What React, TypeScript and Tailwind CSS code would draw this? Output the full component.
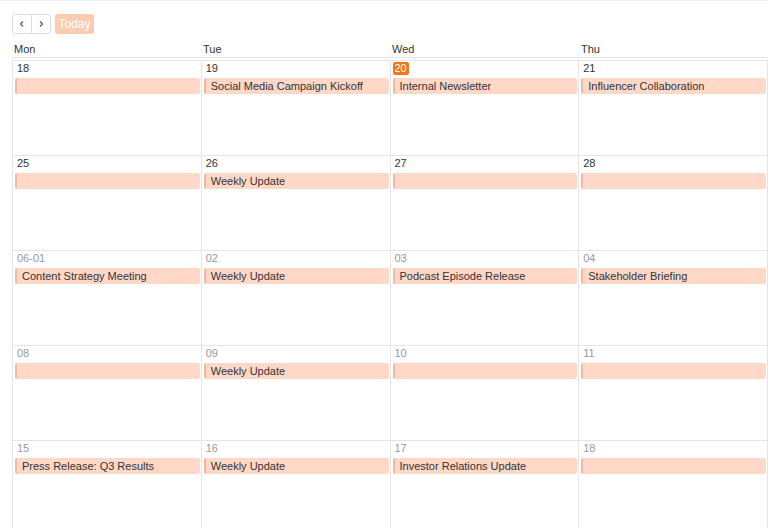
import React from "react";

type Day = {
  label: string;
  muted?: boolean;
  today?: boolean;
  event?: string;
};

const weeks: Day[][] = [
  [
    { label: "18", event: "" },
    { label: "19", event: "Social Media Campaign Kickoff" },
    { label: "20", today: true, event: "Internal Newsletter" },
    { label: "21", event: "Influencer Collaboration" },
  ],
  [
    { label: "25", event: "" },
    { label: "26", event: "Weekly Update" },
    { label: "27", event: "" },
    { label: "28", event: "" },
  ],
  [
    { label: "06-01", muted: true, event: "Content Strategy Meeting" },
    { label: "02", muted: true, event: "Weekly Update" },
    { label: "03", muted: true, event: "Podcast Episode Release" },
    { label: "04", muted: true, event: "Stakeholder Briefing" },
  ],
  [
    { label: "08", muted: true, event: "" },
    { label: "09", muted: true, event: "Weekly Update" },
    { label: "10", muted: true, event: "" },
    { label: "11", muted: true, event: "" },
  ],
  [
    { label: "15", muted: true, event: "Press Release: Q3 Results" },
    { label: "16", muted: true, event: "Weekly Update" },
    { label: "17", muted: true, event: "Investor Relations Update" },
    { label: "18", muted: true, event: "" },
  ],
];

const dayNames = ["Mon", "Tue", "Wed", "Thu"];

const Cell: React.FC<{ day: Day }> = ({ day }) => (
  <div className="h-[95px] border-r border-b border-[#e5e5e5] flex flex-col">
    <div className="h-[17px] pl-[4px] pt-[1px] flex items-start">
      {day.today ? (
        <span className="bg-[#f5761a] text-white text-[11px] leading-[13px] px-[2px] rounded-[2px] -ml-[2px]">
          {day.label}
        </span>
      ) : (
        <span
          className={`text-[11px] leading-[13px] ${
            day.muted ? "text-[#999999]" : "text-[#333333]"
          }`}
        >
          {day.label}
        </span>
      )}
    </div>
    {day.event !== undefined && (
      <div className="ml-[2px] mr-[1px] h-[16px] bg-[#ffd8c8] border-l-2 border-[#f2b8a2] rounded-[2px] pl-[5px] flex items-center text-[11px] text-[#333333] truncate">
        {day.event}
      </div>
    )}
  </div>
);

export default function App() {
  return (
    <div
      className="w-[768px] h-[528px] overflow-hidden bg-white border-t border-[#eeeeee]"
      style={{ fontFamily: '"Liberation Sans", Arial, sans-serif' }}
    >
      <div className="pl-[12px] pt-[13px]">
        <div className="flex items-center gap-[4px] h-[20px]">
          <div className="flex h-[20px] border border-[#dddddd] rounded-[3px] text-[#555555]">
            <button className="w-[19px] flex items-center justify-center border-r border-[#dddddd]">
              <svg width="8" height="8" viewBox="0 0 8 8" fill="none" stroke="currentColor" strokeWidth="1.1">
                <path d="M5 1.5 L2.5 4 L5 6.5" />
              </svg>
            </button>
            <button className="w-[18px] flex items-center justify-center">
              <svg width="8" height="8" viewBox="0 0 8 8" fill="none" stroke="currentColor" strokeWidth="1.1">
                <path d="M3 1.5 L5.5 4 L3 6.5" />
              </svg>
            </button>
          </div>
          <button className="h-[20px] w-[39px] bg-[#fccbb0] text-white text-[12px] rounded-[3px]">
            Today
          </button>
        </div>

        <div className="mt-[6px] grid grid-cols-4 border-b border-[#e5e5e5] h-[18px] pt-[2px]">
          {dayNames.map((d) => (
            <div key={d} className="pl-[2px] text-[11px] text-[#333333] leading-[14px]">
              {d}
            </div>
          ))}
        </div>

        <div className="mt-[2px] border-t border-l border-[#e5e5e5] grid grid-cols-4 w-[756px]">
          {weeks.map((w, i) =>
            w.map((day, j) => <Cell key={`${i}-${j}`} day={day} />)
          )}
        </div>
      </div>
    </div>
  );
}
